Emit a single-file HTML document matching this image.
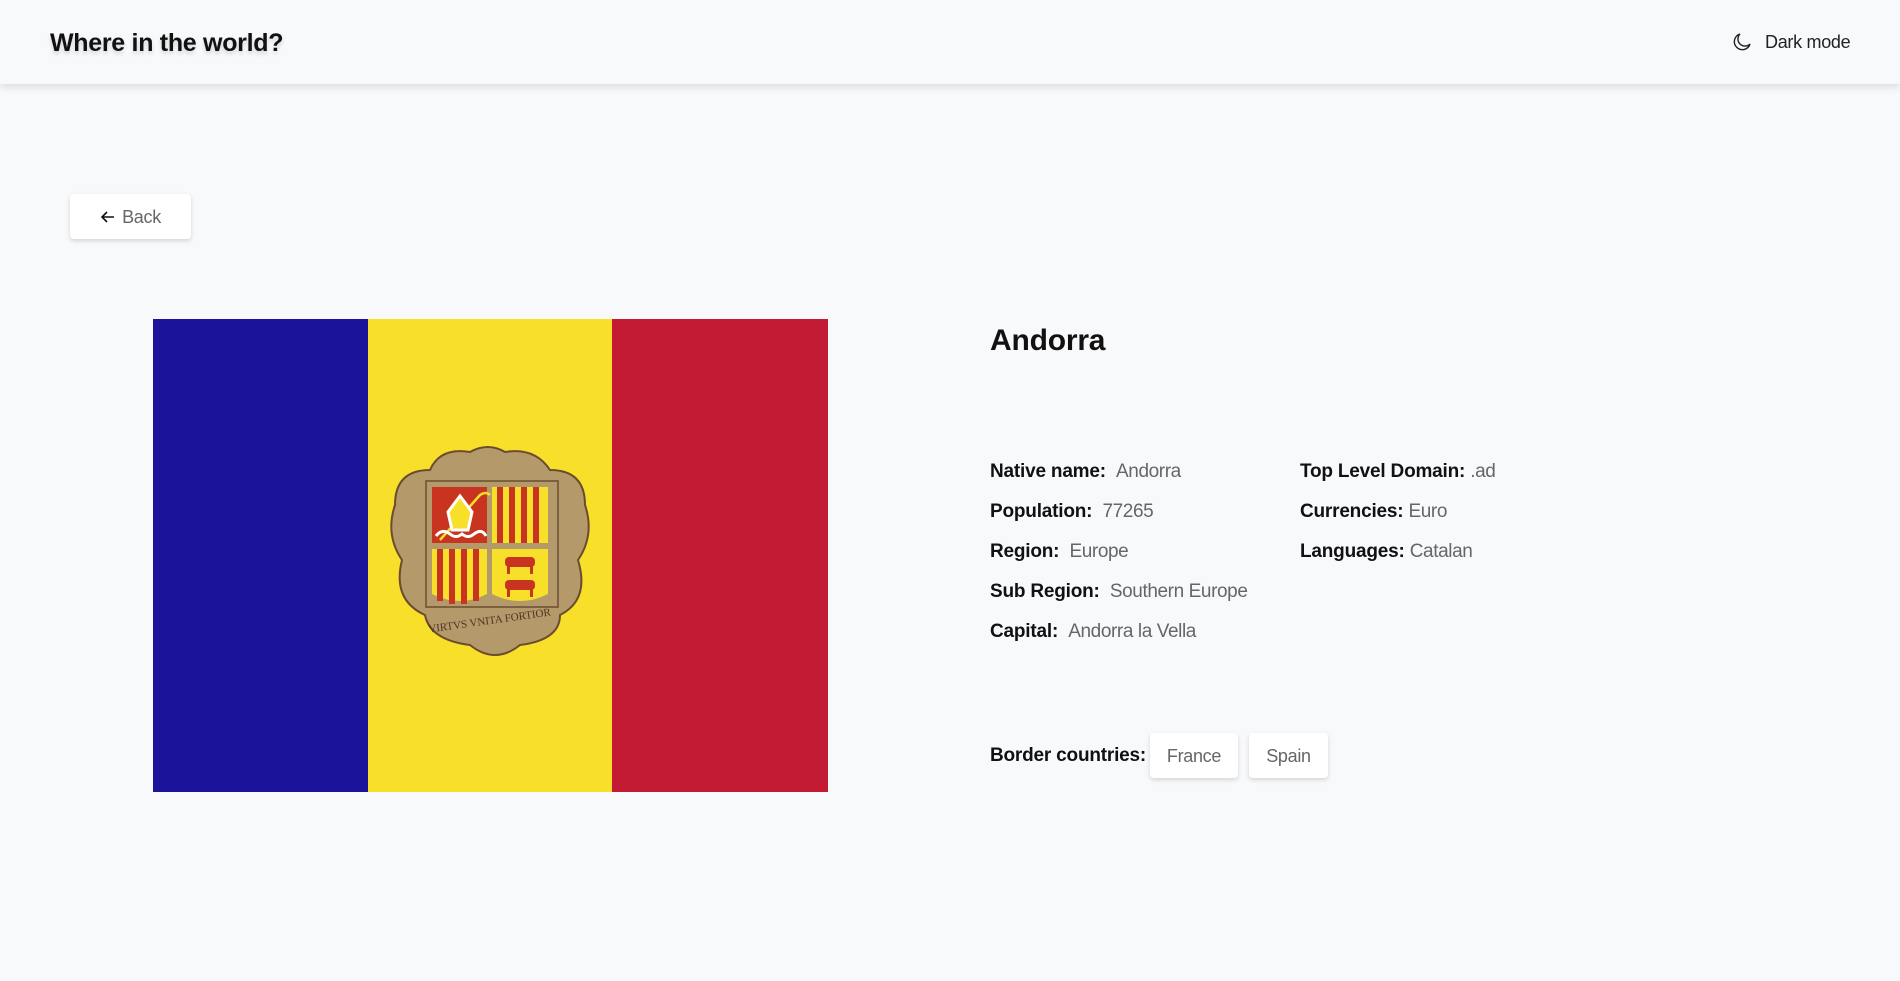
<!DOCTYPE html>
<html><head><meta charset="utf-8"><style>
*{margin:0;padding:0;box-sizing:border-box}
body{width:1900px;height:981px;background:#f8f9fb;font-family:"Liberation Sans",sans-serif;color:#111;position:relative;overflow:hidden}
.hdr{position:absolute;left:0;top:0;width:1900px;height:84px;background:#f8f9fb;box-shadow:0 3px 8px rgba(0,0,0,.12)}
.t{position:absolute;font-size:25px;font-weight:bold;left:50px;top:29px;text-shadow:0 3px 4px rgba(0,0,0,.15);letter-spacing:-0.3px}
.dm{position:absolute;left:1765px;top:32px;font-size:18px;color:#222;letter-spacing:-0.3px}
.btn{position:absolute;background:#fff;border-radius:4px;box-shadow:0 2px 5px rgba(0,0,0,.15);color:#666;font-size:18px;text-align:center;letter-spacing:-0.3px}
.lbl{position:absolute;font-size:19px;font-weight:bold;color:#111;white-space:nowrap;letter-spacing:-0.2px}
.lbl span{font-weight:normal;color:#666;letter-spacing:-0.4px}
</style></head><body>
<div class="hdr"></div>
<div class="t">Where in the world?</div>
<svg style="position:absolute;left:1732px;top:32px" width="20" height="20" viewBox="0 0 20 20"><path d="M8 2a8 8 0 1 0 10 10A7 7 0 0 1 8 2z" fill="none" stroke="#222" stroke-width="1.4"/></svg>
<div class="dm">Dark mode</div>
<div class="btn" style="left:70px;top:194px;width:121px;height:45px;line-height:47px;padding-left:22px">Back</div>
<svg style="position:absolute;left:100px;top:209px" width="16" height="16" viewBox="0 0 16 16"><path d="M14 8H3M7 3L2 8l5 5" fill="none" stroke="#111" stroke-width="1.6"/></svg>
<div style="position:absolute;left:153px;top:319px;width:215px;height:473px;background:#1b149b"></div>
<div style="position:absolute;left:368px;top:319px;width:244px;height:473px;background:#f7df2a"></div>
<div style="position:absolute;left:612px;top:319px;width:216px;height:473px;background:#c31b33"></div>
<svg style="position:absolute;left:389px;top:445px" width="202" height="220" viewBox="389 445 202 220">
<path d="M430 470 Q440 447 470 452 Q488 442 505 452 Q535 447 550 470 Q585 470 585 505 Q595 535 578 560 Q590 600 560 615 Q560 640 520 645 Q495 665 470 645 Q430 640 425 615 Q392 600 402 560 Q385 535 395 505 Q395 470 430 470Z" fill="#b49a6b" stroke="#6b4c2e" stroke-width="2"/>
<rect x="426" y="481" width="132" height="126" fill="#b49a6b" stroke="#6b4c2e" stroke-width="1.5"/>
<rect x="432" y="487" width="55" height="56" fill="#c8341f"/>
<rect x="492" y="487" width="56" height="56" fill="#f7df2a"/>
<g fill="#c8341f"><rect x="497" y="487" width="6" height="56"/><rect x="509" y="487" width="6" height="56"/><rect x="521" y="487" width="6" height="56"/><rect x="533" y="487" width="6" height="56"/></g>
<path d="M432 549h55v45q-27 14-55 0z" fill="#f7df2a"/>
<g fill="#c8341f"><rect x="437" y="549" width="6" height="52"/><rect x="449" y="549" width="6" height="55"/><rect x="461" y="549" width="6" height="55"/><rect x="473" y="549" width="6" height="52"/></g>
<path d="M492 549h56v45q-28 14-56 0z" fill="#f7df2a"/>
<path d="M440 540l40-45q6-4 10 0" fill="none" stroke="#f7df2a" stroke-width="2.5"/>
<path d="M448 512l12-16 12 16-4 18h-16z" fill="#f7df2a" stroke="#fff" stroke-width="3"/>
<path d="M436 536q6-8 14-2q6 5 12 0q6 5 12 0q8-6 12 2" fill="none" stroke="#fff" stroke-width="3"/>
<g fill="#c8341f"><rect x="505" y="557" width="30" height="10" rx="4"/><rect x="505" y="580" width="30" height="10" rx="4"/><rect x="507" y="566" width="3" height="8"/><rect x="530" y="566" width="3" height="8"/><rect x="507" y="589" width="3" height="8"/><rect x="530" y="589" width="3" height="8"/></g>
<text x="490" y="624" font-family="Liberation Serif,serif" font-size="11" fill="#4a3420" text-anchor="middle" transform="rotate(-8 490 624)">VIRTVS VNITA FORTIOR</text>
</svg>
<div class="lbl" style="left:990px;top:324px;font-size:30px">Andorra</div>
<div class="lbl" style="left:990px;top:461px">Native name:&nbsp; <span>Andorra</span></div>
<div class="lbl" style="left:990px;top:501px">Population:&nbsp; <span>77265</span></div>
<div class="lbl" style="left:990px;top:541px">Region:&nbsp; <span>Europe</span></div>
<div class="lbl" style="left:990px;top:581px">Sub Region:&nbsp; <span>Southern Europe</span></div>
<div class="lbl" style="left:990px;top:621px">Capital:&nbsp; <span>Andorra la Vella</span></div>
<div class="lbl" style="left:1300px;top:461px">Top Level Domain: <span>.ad</span></div>
<div class="lbl" style="left:1300px;top:501px">Currencies: <span>Euro</span></div>
<div class="lbl" style="left:1300px;top:541px">Languages: <span>Catalan</span></div>
<div class="lbl" style="left:990px;top:745px">Border countries:</div>
<div class="btn" style="left:1150px;top:733px;width:88px;height:45px;line-height:47px">France</div>
<div class="btn" style="left:1249px;top:733px;width:79px;height:45px;line-height:47px">Spain</div>
</body></html>
